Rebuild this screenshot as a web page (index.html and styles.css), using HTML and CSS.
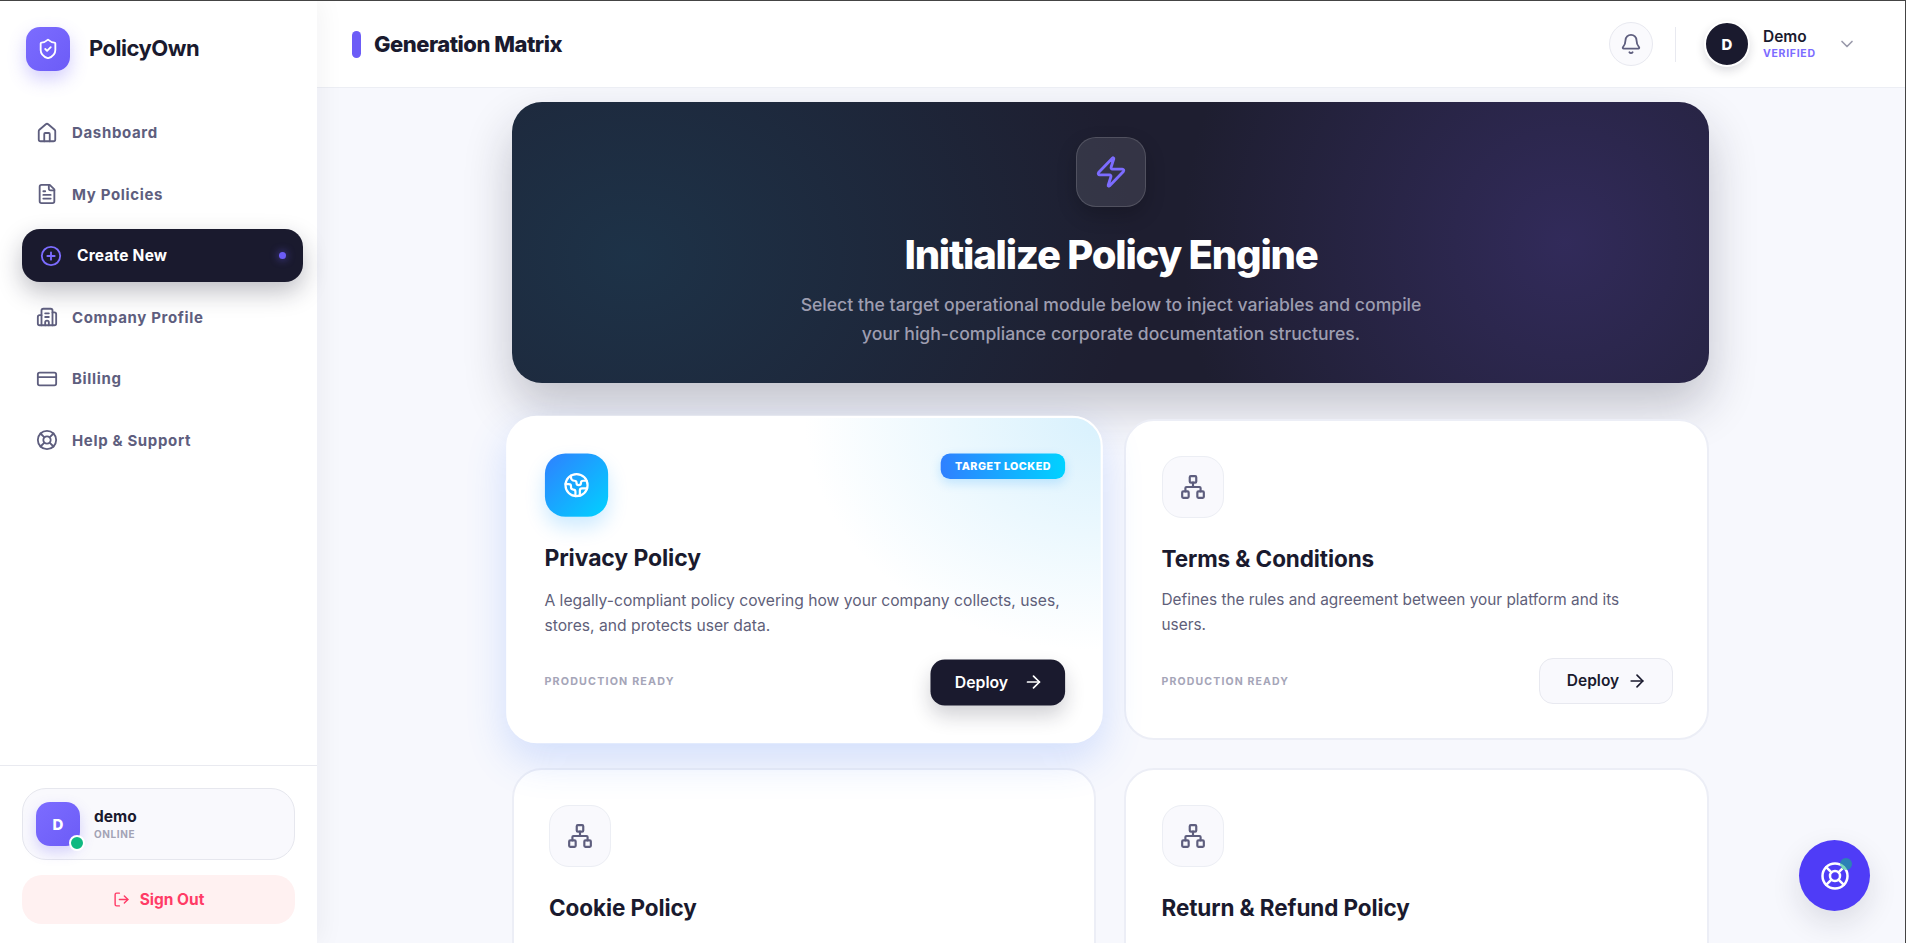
FILE: index.html
```html
<!DOCTYPE html>
<html lang="en">

<head>
  <meta charset="UTF-8">
  <meta name="viewport" content="width=device-width, initial-scale=1.0">
  <title>PolicyOwn</title>
  <link rel="stylesheet" href="styles.css">
</head>

<body>
  <svg class="sprite" xmlns="http://www.w3.org/2000/svg" aria-hidden="true" width="0" height="0">
    <defs>
      <symbol id="i-home" viewBox="0 0 24 24"><path d="M15 21v-8a1 1 0 0 0-1-1h-4a1 1 0 0 0-1 1v8"/><path d="M3 10a2 2 0 0 1 .709-1.528l7-5.999a2 2 0 0 1 2.582 0l7 5.999A2 2 0 0 1 21 10v9a2 2 0 0 1-2 2H5a2 2 0 0 1-2-2z"/></symbol>
      <symbol id="i-file" viewBox="0 0 24 24"><path d="M15 2H6a2 2 0 0 0-2 2v16a2 2 0 0 0 2 2h12a2 2 0 0 0 2-2V7Z"/><path d="M14 2v4a2 2 0 0 0 2 2h4"/><path d="M10 9H8"/><path d="M16 13H8"/><path d="M16 17H8"/></symbol>
      <symbol id="i-plus" viewBox="0 0 24 24"><circle cx="12" cy="12" r="10"/><path d="M8 12h8"/><path d="M12 8v8"/></symbol>
      <symbol id="i-building" viewBox="0 0 24 24"><path d="M10 12h4"/><path d="M10 8h4"/><path d="M14 21v-3a2 2 0 0 0-4 0v3"/><path d="M6 10H4a2 2 0 0 0-2 2v7a2 2 0 0 0 2 2h16a2 2 0 0 0 2-2V9a2 2 0 0 0-2-2h-2"/><path d="M6 21V5a2 2 0 0 1 2-2h8a2 2 0 0 1 2 2v16"/></symbol>
      <symbol id="i-card" viewBox="0 0 24 24"><rect x="2" y="5" width="20" height="14" rx="2"/><path d="M2 10h20"/></symbol>
      <symbol id="i-help" viewBox="0 0 24 24"><circle cx="12" cy="12" r="10"/><path d="m4.93 4.93 4.24 4.24"/><path d="m14.83 9.17 4.24-4.24"/><path d="m14.83 14.83 4.24 4.24"/><path d="m9.17 14.83-4.24 4.24"/><circle cx="12" cy="12" r="4"/></symbol>
      <symbol id="i-shield" viewBox="0 0 24 24"><path d="M20 13c0 5-3.5 7.5-7.66 8.95a1 1 0 0 1-.67-.01C7.5 20.5 4 18 4 13V6a1 1 0 0 1 1-1c2 0 4.5-1.2 6.24-2.72a1.17 1.17 0 0 1 1.52 0C14.51 3.81 17 5 19 5a1 1 0 0 1 1 1z"/><path d="m9 12 2 2 4-4"/></symbol>
      <symbol id="i-bell" viewBox="0 0 24 24"><path d="M10.268 21a2 2 0 0 0 3.464 0"/><path d="M3.262 15.326A1 1 0 0 0 4 17h16a1 1 0 0 0 .74-1.673C19.41 13.956 18 12.499 18 8A6 6 0 0 0 6 8c0 4.499-1.411 5.956-2.738 7.326"/></symbol>
      <symbol id="i-chevron" viewBox="0 0 24 24"><path d="m6 9 6 6 6-6"/></symbol>
      <symbol id="i-logout" viewBox="0 0 24 24"><path d="m16 17 5-5-5-5"/><path d="M21 12H9"/><path d="M9 21H5a2 2 0 0 1-2-2V5a2 2 0 0 1 2-2h4"/></symbol>
      <symbol id="i-zap" viewBox="0 0 24 24"><path d="M4 14a1 1 0 0 1-.78-1.63l9.9-10.2a.5.5 0 0 1 .86.46l-1.92 6.02A1 1 0 0 0 13 10h7a1 1 0 0 1 .78 1.63l-9.9 10.2a.5.5 0 0 1-.86-.46l1.92-6.02A1 1 0 0 0 11 14z"/></symbol>
      <symbol id="i-earth" viewBox="0 0 24 24"><path d="M21.54 15H17a2 2 0 0 0-2 2v4.54"/><path d="M7 3.34V5a3 3 0 0 0 3 3a2 2 0 0 1 2 2c0 1.1.9 2 2 2a2 2 0 0 0 2-2c0-1.1.9-2 2-2h3.17"/><path d="M11 21.95V18a2 2 0 0 0-2-2a2 2 0 0 1-2-2v-1a2 2 0 0 0-2-2H2.05"/><circle cx="12" cy="12" r="10"/></symbol>
      <symbol id="i-network" viewBox="0 0 24 24"><rect x="16" y="16" width="6" height="6" rx="1"/><rect x="2" y="16" width="6" height="6" rx="1"/><rect x="9" y="2" width="6" height="6" rx="1"/><path d="M5 16v-3a1 1 0 0 1 1-1h12a1 1 0 0 1 1 1v3"/><path d="M12 12V8"/></symbol>
      <symbol id="i-arrow" viewBox="0 0 24 24"><path d="M5 12h14"/><path d="m12 5 7 7-7 7"/></symbol>
    </defs>
  </svg>

  <aside class="sidebar">
    <div class="brand">
      <span class="brand-logo"><svg class="icon"><use href="#i-shield"></use></svg></span>
      <span class="brand-name">PolicyOwn</span>
    </div>

    <nav class="nav">
      <a class="nav-item"><svg class="icon"><use href="#i-home"></use></svg>Dashboard</a>
      <a class="nav-item"><svg class="icon"><use href="#i-file"></use></svg>My Policies</a>
      <a class="nav-item active"><svg class="icon"><use href="#i-plus"></use></svg>Create New<span class="nav-dot"></span></a>
      <a class="nav-item"><svg class="icon"><use href="#i-building"></use></svg>Company Profile</a>
      <a class="nav-item"><svg class="icon"><use href="#i-card"></use></svg>Billing</a>
      <a class="nav-item"><svg class="icon"><use href="#i-help"></use></svg>Help &amp; Support</a>
    </nav>

    <div class="sidebar-foot">
      <div class="user-card">
        <span class="user-avatar">D<span class="user-status"></span></span>
        <div>
          <div class="user-name">demo</div>
          <div class="user-state">ONLINE</div>
        </div>
      </div>
      <button class="sign-out"><svg class="icon"><use href="#i-logout"></use></svg>Sign Out</button>
    </div>
  </aside>

  <div class="page">
    <header class="topbar">
      <div class="topbar-title">
        <span class="title-bar"></span>
        <h1>Generation Matrix</h1>
      </div>
      <div class="topbar-right">
        <button class="bell"><svg class="icon"><use href="#i-bell"></use></svg></button>
        <span class="topbar-sep"></span>
        <span class="account-avatar">D</span>
        <div class="account-text">
          <div class="account-name">Demo</div>
          <div class="account-state">VERIFIED</div>
        </div>
        <svg class="icon account-chevron"><use href="#i-chevron"></use></svg>
      </div>
    </header>

    <main class="content">
      <section class="hero">
        <span class="hero-icon"><svg class="icon"><use href="#i-zap"></use></svg></span>
        <h2>Initialize Policy Engine</h2>
        <p>Select the target operational module below to inject variables and compile<br>your high-compliance corporate documentation structures.</p>
      </section>

      <section class="cards">
        <article class="card selected">
          <div class="card-top">
            <span class="card-icon"><svg class="icon"><use href="#i-earth"></use></svg></span>
            <span class="badge">TARGET LOCKED</span>
          </div>
          <h3>Privacy Policy</h3>
          <p>A legally-compliant policy covering how your company collects, uses, stores, and protects user data.</p>
          <div class="card-foot">
            <span class="card-note">PRODUCTION READY</span>
            <button class="deploy">Deploy<svg class="icon"><use href="#i-arrow"></use></svg></button>
          </div>
        </article>

        <article class="card">
          <div class="card-top">
            <span class="card-icon"><svg class="icon"><use href="#i-network"></use></svg></span>
          </div>
          <h3>Terms &amp; Conditions</h3>
          <p>Defines the rules and agreement between your platform and its<br>users.</p>
          <div class="card-foot">
            <span class="card-note">PRODUCTION READY</span>
            <button class="deploy">Deploy<svg class="icon"><use href="#i-arrow"></use></svg></button>
          </div>
        </article>

        <article class="card">
          <div class="card-top">
            <span class="card-icon"><svg class="icon"><use href="#i-network"></use></svg></span>
          </div>
          <h3>Cookie Policy</h3>
        </article>

        <article class="card">
          <div class="card-top">
            <span class="card-icon"><svg class="icon"><use href="#i-network"></use></svg></span>
          </div>
          <h3>Return &amp; Refund Policy</h3>
        </article>
      </section>
    </main>
  </div>

  <button class="help-fab"><svg class="icon"><use href="#i-help"></use></svg><span class="fab-ping"></span></button>
</body>

</html>
```

FILE: styles.css
```css
* {
  box-sizing: border-box;
}

html,
body {
  height: 100%;
}

body {
  margin: 0;
  display: flex;
  overflow: hidden;
  border-top: 1px solid #444;
  border-right: 1px solid #444;
  background: #f7f8fd;
  color: #1a1a2e;
  font-family: "Inter", "Liberation Sans", sans-serif;
}

button {
  font-family: inherit;
  cursor: pointer;
}

h1,
h2,
h3,
p {
  margin: 0;
}

.sprite {
  position: absolute;
}

.icon {
  display: block;
  width: 22px;
  height: 22px;
  flex: none;
  fill: none;
  stroke: currentColor;
  stroke-width: 2;
  stroke-linecap: round;
  stroke-linejoin: round;
}

/* sidebar */
.sidebar {
  width: 317px;
  flex: none;
  display: flex;
  flex-direction: column;
  position: relative;
  z-index: 2;
  background: #fff;
  box-shadow: 4px 0 24px rgba(26, 26, 46, 0.05);
}

.brand {
  display: flex;
  align-items: center;
  gap: 19px;
  padding: 26px 0 0 26px;
}

.brand-logo {
  width: 44px;
  height: 44px;
  display: flex;
  align-items: center;
  justify-content: center;
  border-radius: 14px;
  color: #fff;
  background: linear-gradient(135deg, #7c6cff, #6c5cf7);
  box-shadow: 0 8px 18px rgba(108, 92, 247, 0.3);
}

.brand-name {
  margin-top: -2px;
  font-size: 22px;
  font-weight: 700;
  letter-spacing: -0.5px;
}

.nav {
  flex: 1;
  display: flex;
  flex-direction: column;
  gap: 8.5px;
  padding: 35.4px 14px 0 22px;
}

.nav-item {
  height: 53px;
  display: flex;
  align-items: center;
  gap: 14px;
  padding-left: 14px;
  border-radius: 18px;
  color: #5e5e7e;
  font-size: 15px;
  font-weight: 700;
  letter-spacing: 0.65px;
}

.nav-item.active {
  padding-left: 18px;
  gap: 15px;
  color: #fff;
  font-size: 15.5px;
  letter-spacing: 0.2px;
  background: #1a1a2e;
  box-shadow: 0 10px 24px rgba(26, 26, 46, 0.28);
}

.nav-item.active .icon {
  color: #7c6cff;
}

.nav-dot {
  width: 7px;
  height: 7px;
  margin-left: auto;
  margin-right: 17px;
  border-radius: 50%;
  background: #6c5cf7;
  box-shadow: 0 0 8px rgba(108, 92, 247, 0.8);
}

.sidebar-foot {
  display: flex;
  flex-direction: column;
  gap: 15px;
  padding: 22px 22px 19px;
  border-top: 1px solid #e9eaf0;
}

.user-card {
  height: 72px;
  display: flex;
  align-items: center;
  gap: 14px;
  padding-left: 13px;
  border: 1px solid #e6e7ee;
  border-radius: 24px;
  background: #f9f9fd;
}

.user-avatar {
  width: 44px;
  height: 44px;
  display: flex;
  align-items: center;
  justify-content: center;
  position: relative;
  border-radius: 14px;
  color: #fff;
  font-size: 15px;
  font-weight: 800;
  background: linear-gradient(135deg, #7c6cff, #6c5cf7);
  box-shadow: 0 6px 14px rgba(108, 92, 247, 0.25);
}

.user-status {
  position: absolute;
  right: -5px;
  bottom: -5px;
  width: 16px;
  height: 16px;
  border: 2px solid #fff;
  border-radius: 50%;
  background: #10b981;
}

.user-name {
  margin-top: -1px;
  font-size: 15.5px;
  font-weight: 700;
  line-height: 18px;
}

.user-state {
  margin-top: 2px;
  color: #a3a3b5;
  font-size: 10px;
  font-weight: 700;
  letter-spacing: 0.6px;
  line-height: 12px;
}

.sign-out {
  height: 49px;
  display: flex;
  align-items: center;
  justify-content: center;
  gap: 10px;
  border: 0;
  border-radius: 20px;
  color: #ff3b66;
  font-size: 15.5px;
  font-weight: 700;
  background: #fff1f1;
}

.sign-out .icon {
  width: 17px;
  height: 17px;
}

/* top bar */
.page {
  flex: 1;
  min-width: 0;
  display: flex;
  flex-direction: column;
}

.topbar {
  height: 87px;
  flex: none;
  display: flex;
  align-items: center;
  justify-content: space-between;
  padding: 0 48px 0 35px;
  background: #fff;
  border-bottom: 1px solid #eceef4;
}

.topbar-title {
  display: flex;
  align-items: center;
  gap: 13px;
}

.title-bar {
  width: 9px;
  height: 27px;
  border-radius: 5px;
  background: #6c5cf7;
}

.topbar-title h1 {
  font-size: 22px;
  font-weight: 800;
  letter-spacing: -0.5px;
}

.topbar-right {
  display: flex;
  align-items: center;
}

.bell {
  width: 44px;
  height: 44px;
  display: flex;
  align-items: center;
  justify-content: center;
  padding: 0;
  border: 1px solid #e8e9f0;
  border-radius: 50%;
  color: #5e5e7e;
  background: #fafafd;
}

.topbar-sep {
  width: 1px;
  height: 35px;
  margin: 0 29px 0 22px;
  background: #e8e9f0;
}

.account-avatar {
  width: 46px;
  height: 46px;
  margin: 0 -1px;
  display: flex;
  align-items: center;
  justify-content: center;
  border: 2px solid #fff;
  border-radius: 50%;
  color: #fff;
  font-size: 15px;
  font-weight: 800;
  background: #1a1a2e;
  box-shadow: 0 4px 10px rgba(26, 26, 46, 0.15);
}

.account-text {
  margin-left: 14px;
  width: 74px;
}

.account-name {
  font-size: 15.5px;
  font-weight: 600;
  line-height: 18px;
}

.account-state {
  margin-top: 1px;
  color: #7c6cff;
  font-size: 10.5px;
  font-weight: 700;
  letter-spacing: 0.7px;
  line-height: 13px;
}

.account-chevron {
  color: #9a9aab;
  width: 20px;
  height: 20px;
}

/* main */
.content {
  flex: 1;
  overflow: hidden;
  padding: 14px 2px 0 0;
}

.hero {
  width: 1197px;
  height: 281px;
  margin: 0 auto;
  display: flex;
  flex-direction: column;
  align-items: center;
  padding: 35px 0 0 2px;
  border-radius: 30px;
  text-align: center;
  background:
    radial-gradient(ellipse 42% 150% at 10% 55%, rgba(29, 54, 76, 0.85), rgba(29, 54, 76, 0) 100%),
    radial-gradient(ellipse 32% 140% at 88% 50%, rgba(58, 48, 108, 0.7), rgba(58, 48, 108, 0) 100%),
    #1e1e30;
  box-shadow: 0 24px 48px rgba(26, 26, 46, 0.24);
}

.hero-icon {
  width: 70px;
  height: 70px;
  display: flex;
  align-items: center;
  justify-content: center;
  border: 1px solid rgba(255, 255, 255, 0.14);
  border-radius: 20px;
  color: #7c6cff;
  background: rgba(255, 255, 255, 0.1);
  box-shadow: 0 8px 20px rgba(0, 0, 0, 0.2);
}

.hero-icon .icon {
  width: 34px;
  height: 34px;
}

.hero h2 {
  margin-top: 24px;
  color: #fff;
  font-size: 40px;
  font-weight: 800;
  letter-spacing: -1.2px;
  line-height: 48px;
}

.hero p {
  margin-top: 11px;
  color: #9d9db0;
  font-size: 17.6px;
  font-weight: 500;
  line-height: 29px;
}

.cards {
  width: 1197px;
  margin: 36px auto 0;
  display: grid;
  grid-template-columns: 1fr 1fr;
  gap: 28px;
}

.card {
  min-height: 321px;
  padding: 34.5px 33.5px 34.5px 35.5px;
  border: 2px solid #eceef6;
  border-radius: 30px;
  background: #fff;
}

.card.selected {
  position: relative;
  z-index: 1;
  padding-right: 34.5px;
  transform: scale(1.02);
  border-color: #fff;
  background: radial-gradient(ellipse 50% 72% at 100% 0, #d8f1fd, rgba(216, 241, 253, 0) 100%), #fff;
  box-shadow: 0 16px 40px rgba(60, 120, 250, 0.2);
}

.card-top {
  display: flex;
  align-items: flex-start;
  justify-content: space-between;
}

.card-icon {
  width: 62px;
  height: 62px;
  display: flex;
  align-items: center;
  justify-content: center;
  border: 1px solid #eceef4;
  border-radius: 20px;
  color: #5e5e7e;
  background: #f9f9fd;
}

.card-icon .icon {
  width: 26px;
  height: 26px;
}

.selected .card-icon {
  border: 0;
  color: #fff;
  background: linear-gradient(135deg, #2f80ff, #00d2ff);
  box-shadow: 0 10px 20px rgba(0, 150, 255, 0.2);
}

.badge {
  padding: 0 14px;
  border-radius: 9px;
  color: #fff;
  font-size: 10.5px;
  font-weight: 800;
  letter-spacing: 0.45px;
  line-height: 25px;
  background: linear-gradient(90deg, #2f80ff, #00d2ff);
  box-shadow: 0 4px 10px rgba(0, 150, 255, 0.2);
}

.card h3 {
  margin-top: 27px;
  font-size: 22.5px;
  font-weight: 700;
  letter-spacing: -0.1px;
  line-height: 28px;
}

.selected h3 {
  margin-top: 26px;
}

.card p {
  margin-top: 14px;
  height: 51px;
  color: #5f5f7a;
  font-size: 15.36px;
  line-height: 25.5px;
}

.selected p {
  margin-top: 15px;
}

.card-foot {
  margin-top: 20px;
  display: flex;
  align-items: center;
  justify-content: space-between;
}

.card-note {
  margin-top: 2px;
  color: #a5a5b8;
  font-size: 10.5px;
  font-weight: 700;
  letter-spacing: 1.15px;
}

.selected .card-note {
  margin-top: -2px;
}

.deploy {
  width: 134px;
  height: 46px;
  display: flex;
  align-items: center;
  justify-content: center;
  gap: 8px;
  padding: 0 0 0 2px;
  border: 1px solid #e8e9f0;
  border-radius: 14px;
  color: #1a1a2e;
  font-size: 15.5px;
  font-weight: 600;
  background: #f9f9fd;
}

.deploy .icon {
  width: 20px;
  height: 20px;
}

.selected .deploy {
  width: 132px;
  height: 45px;
  gap: 15px;
  padding-left: 3px;
  border: 0;
  color: #fff;
  background: #1a1a2e;
  box-shadow: 0 10px 20px rgba(26, 26, 46, 0.2);
}

/* floating help button */
.help-fab {
  position: fixed;
  left: 1799px;
  top: 840px;
  z-index: 3;
  width: 71px;
  height: 71px;
  display: flex;
  align-items: center;
  justify-content: center;
  padding: 0;
  border: 0;
  border-radius: 50%;
  color: #fff;
  background: #4f3cf7;
  box-shadow: 0 12px 30px rgba(26, 26, 46, 0.12);
}

.help-fab .icon {
  width: 30px;
  height: 30px;
}

.fab-ping {
  position: absolute;
  top: 18px;
  right: 18px;
  width: 12px;
  height: 12px;
  border-radius: 50%;
  background: rgba(16, 185, 129, 0.55);
}
```
